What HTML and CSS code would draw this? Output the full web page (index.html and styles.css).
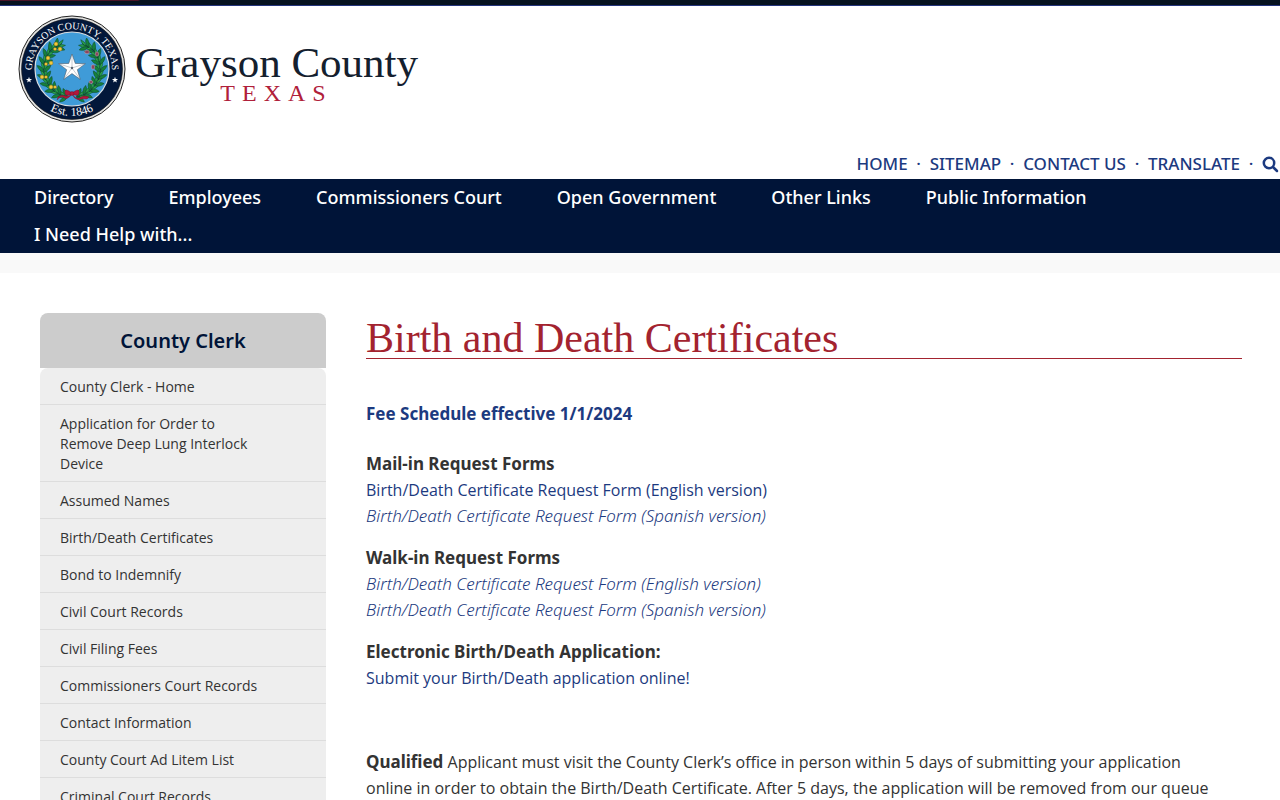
FILE: index.html
```
<!DOCTYPE html>
<html lang="en">
<head>
    <meta charset="UTF-8">
    <meta name="viewport" content="width=device-width, initial-scale=1.0">
    <title>Birth and Death Certificates - Grayson County, Texas</title>
    <link rel="stylesheet" href="styles.css">
</head>
<body>
    <div class="top-bar"></div>

    <header class="site-header">
        <a class="logo" href="#">
            <svg class="seal" viewBox="-54 -54 108 108" aria-hidden="true">
                <defs>
                    <path id="arc-top" d="M-39.8 4.2 A40 40 0 1 1 39.8 4.2"/>
                    <path id="arc-bottom" d="M-47 0 A47 47 0 0 0 47 0"/>
                    <path id="star" d="M0 -10 L2.35 -3.24 L9.51 -3.09 L3.8 1.24 L5.88 8.09 L0 4 L-5.88 8.09 L-3.8 1.24 L-9.51 -3.09 L-2.35 -3.24 Z"/>
                    <!-- one tuft of leaves, growing downwards -->
                    <g id="sprig">
                        <path d="M0 -3 Q1 0 0 5" stroke="#123f22" stroke-width="1"/>
                        <path d="M0 -2 Q5 -2 7 4 Q2 4 0 -2Z M0 -2 Q-5 -2 -7 4 Q-2 4 0 -2Z" fill="#16813b" stroke="#0c4a27" stroke-width=".5"/>
                        <path d="M0 0 Q3 2 2.5 8 Q-1 5 0 0Z M0 0 Q-4 2 -3.5 7 Q0 5 0 0Z" fill="#2aa34c" stroke="#0c4a27" stroke-width=".5"/>
                    </g>
                    <g id="branch">
                        <use href="#sprig" transform="rotate(104) translate(28 0)"/>
                        <use href="#sprig" transform="rotate(119) translate(28 0)"/>
                        <use href="#sprig" transform="rotate(134) translate(28 0)"/>
                        <use href="#sprig" transform="rotate(149) translate(28 0)"/>
                        <use href="#sprig" transform="rotate(164) translate(28 0)"/>
                        <use href="#sprig" transform="rotate(179) translate(28 0)"/>
                        <use href="#sprig" transform="rotate(194) translate(28 0)"/>
                        <use href="#sprig" transform="rotate(209) translate(28 0)"/>
                        <use href="#sprig" transform="rotate(224) translate(28 0)"/>
                        <use href="#sprig" transform="rotate(238) translate(27 0)"/>
                    </g>
                </defs>
                <circle r="53" fill="#e4e4e2" stroke="#222" stroke-width="1"/>
                <circle r="50.5" fill="#02173a" stroke="#1a1a1a" stroke-width=".6"/>
                <circle r="37" fill="#3f9bd8" stroke="#d8dde2" stroke-width="1.2"/>
                <use href="#branch"/>
                <use href="#branch" transform="scale(-1 1)"/>
                <g fill="#f3c93a" stroke="#7c5a12" stroke-width=".4">
                    <circle cx="-16" cy="-25" r="2"/><circle cx="-12" cy="-20" r="2"/><circle cx="-17" cy="-20" r="1.6"/>
                    <circle cx="-24" cy="-11" r="2"/><circle cx="-21" cy="-6" r="2"/><circle cx="-26" cy="-5" r="1.6"/>
                    <circle cx="-30" cy="8" r="2"/><circle cx="-26" cy="8" r="1.6"/>
                    <circle cx="-21" cy="18" r="2"/><circle cx="-17" cy="18" r="1.6"/>
                </g>
                <g fill="#8b4560" stroke="#e0b5bd" stroke-width=".4">
                    <ellipse cx="15" cy="-17" rx="2.4" ry="1.7"/><ellipse cx="25" cy="-15" rx="1.6" ry="2.2"/>
                    <ellipse cx="21" cy="-2" rx="1.7" ry="2.3"/><ellipse cx="19" cy="13" rx="1.8" ry="1.5"/>
                </g>
                <g fill="#b3173b" stroke="#6e0d26" stroke-width=".4">
                    <path d="M0 24 Q-8 18 -7 24 Q-7 28 0 25Z M0 24 Q8 18 7 24 Q7 28 0 25Z"/>
                    <path d="M0 25 Q-5 32 -9 28 Q-12 27 -15 31 L-14 28 Q-10 25 -7 27 Q-4 28 0 25Z M0 25 Q5 32 9 28 Q13 26 17 28 L15 30 Q10 29 7 31 Q2 30 0 25Z"/>
                    <circle cy="24.5" r="2"/>
                </g>
                <use href="#star" fill="#fff" stroke="#4b5560" stroke-width=".4" transform="translate(0 -1) scale(1.4)"/>
                <path d="M0 -1 V-14 M0 -1 L12.5 -5 M0 -1 L8 10 M0 -1 L-8 10 M0 -1 L-12.5 -5" stroke="#8d969f" stroke-width=".5"/>
                <circle cy="-1" r="1.2" fill="#59636e"/>
                <use href="#star" fill="#fff" transform="translate(-43 11) scale(.32)"/>
                <use href="#star" fill="#fff" transform="translate(43 11) scale(.32)"/>
                <text class="seal-text"><textPath href="#arc-top" startOffset="50%">GRAYSON COUNTY, TEXAS</textPath></text>
                <text class="seal-text seal-year"><textPath href="#arc-bottom" startOffset="50%">Est. 1846</textPath></text>
            </svg>
            <span class="logo-words">
                <span class="logo-name">Grayson County</span>
                <span class="logo-state">TEXAS</span>
            </span>
        </a>

        <ul class="quick-links">
            <li><a href="#">HOME</a></li>
            <li><a href="#">SITEMAP</a></li>
            <li><a href="#">CONTACT US</a></li>
            <li><a href="#">TRANSLATE</a></li>
            <li>
                <button class="search-btn" type="button" aria-label="Search">
                    <svg viewBox="0 0 17 17" aria-hidden="true">
                        <circle cx="7" cy="7" r="5.2"/>
                        <path d="M11 11 L15 15"/>
                    </svg>
                </button>
            </li>
        </ul>
    </header>

    <nav class="main-nav">
        <a href="#">Directory</a>
        <a href="#">Employees</a>
        <a href="#">Commissioners Court</a>
        <a href="#">Open Government</a>
        <a href="#">Other Links</a>
        <a href="#">Public Information</a>
        <a href="#">I Need Help with...</a>
    </nav>
    <div class="nav-strip"></div>

    <div class="page">
        <aside class="sidebar">
            <h2>County Clerk</h2>
            <ul>
                <li><a href="#">County Clerk - Home</a></li>
                <li><a href="#">Application for Order to Remove Deep Lung Interlock Device</a></li>
                <li><a href="#">Assumed Names</a></li>
                <li><a href="#">Birth/Death Certificates</a></li>
                <li><a href="#">Bond to Indemnify</a></li>
                <li><a href="#">Civil Court Records</a></li>
                <li><a href="#">Civil Filing Fees</a></li>
                <li><a href="#">Commissioners Court Records</a></li>
                <li><a href="#">Contact Information</a></li>
                <li><a href="#">County Court Ad Litem List</a></li>
                <li><a href="#">Criminal Court Records</a></li>
            </ul>
        </aside>

        <main class="content">
            <h1>Birth and Death Certificates</h1>
            <p class="fees"><a href="#"><strong>Fee Schedule effective 1/1/2024</strong></a></p>
            <p>
                <strong>Mail-in Request Forms</strong><br>
                <a href="#">Birth/Death Certificate Request Form (English version)</a><br>
                <a href="#"><em>Birth/Death Certificate Request Form (Spanish version)</em></a>
            </p>
            <p>
                <strong>Walk-in Request Forms</strong><br>
                <a href="#"><em>Birth/Death Certificate Request Form (English version)</em></a><br>
                <a href="#"><em>Birth/Death Certificate Request Form (Spanish version)</em></a>
            </p>
            <p>
                <strong>Electronic Birth/Death Application:</strong><br>
                <a href="#">Submit your Birth/Death application online!</a>
            </p>
            <p>&nbsp;</p>
            <p><strong>Qualified</strong> Applicant must visit the County Clerk’s office in person within 5 days of submitting your application online in order to obtain the Birth/Death Certificate. After 5 days, the application will be removed from our queue</p>
        </main>
    </div>
</body>
</html>
```
FILE: styles.css
```
:root {
    --navy: #001438;
    --link: #1c3a80;
    --red: #a3232f;
    --text: #333333;
}
* {
    box-sizing: border-box;
}
body {
    margin: 0;
    background-color: #ffffff;
    color: var(--text);
    font-family: "Noto Sans", "Open Sans", sans-serif;
    font-size: 17px;
    line-height: 26px;
}
a {
    color: var(--link);
    text-decoration: none;
}
ul {
    list-style: none;
    margin: 0;
    padding: 0;
}

/* header */
.top-bar {
    height: 6px;
    background: linear-gradient(to right, #4a1428 138px, transparent 140px) top / 100% 1px no-repeat #06121f;
    border-bottom: 1px solid #24357c;
}
.site-header {
    display: flex;
    flex-direction: column;
    justify-content: space-between;
    min-height: 173px;
    padding: 9px 0 2px 18px;
}
.logo {
    display: flex;
    align-self: flex-start;
    gap: 9px;
}
.seal {
    width: 108px;
    height: 108px;
    fill: none;
}
.seal-text {
    fill: #ffffff;
    font-family: "Liberation Serif", serif;
    font-size: 10px;
    text-anchor: middle;
}
.seal-year {
    font-size: 12px;
}
.logo-words {
    display: flex;
    flex-direction: column;
    align-items: center;
    padding-top: 28px;
    font-family: "Liberation Serif", serif;
}
.logo-name {
    color: #14202e;
    font-size: 43px;
    line-height: 40px;
}
.logo-state {
    color: #b0203a;
    font-size: 24px;
    line-height: 20px;
    letter-spacing: 7px;
}
.quick-links {
    display: flex;
    align-self: flex-end;
    font-weight: 500;
}
.quick-links li {
    display: flex;
    align-items: center;
}
.quick-links li + li::before {
    content: "·";
    width: 22px;
    color: var(--link);
    text-align: center;
}
.search-btn {
    display: flex;
    padding: 0 1px 0 0;
    border: 0;
    background: none;
    cursor: pointer;
}
.search-btn svg {
    width: 17px;
    height: 17px;
    fill: none;
    stroke: var(--link);
    stroke-width: 2.5;
    stroke-linecap: round;
}

/* navigation */
.main-nav {
    display: flex;
    flex-wrap: wrap;
    column-gap: 55px;
    padding: 0 34px;
    background-color: var(--navy);
}
.main-nav a {
    color: #ffffff;
    font-size: 18px;
    font-weight: 500;
    line-height: 37px;
}
.nav-strip {
    height: 20px;
    background-color: #f9f9f9;
}

/* page */
.page {
    display: flex;
    align-items: flex-start;
    gap: 40px;
    padding: 40px 38px 40px 40px;
}
.sidebar {
    flex: 0 0 286px;
}
.sidebar h2 {
    margin: 0;
    border-radius: 8px 8px 0 0;
    background-color: #cccccc;
    color: var(--navy);
    font-size: 20px;
    font-weight: 600;
    line-height: 55px;
    text-align: center;
}
.sidebar ul {
    border-radius: 8px 8px 0 0;
    background-color: #eeeeee;
}
.sidebar li {
    border-bottom: 1px solid #dddddd;
}
.sidebar a {
    display: block;
    padding: 9px 60px 7px 20px;
    color: var(--text);
    font-family: "Open Sans", sans-serif;
    font-size: 14px;
    line-height: 20px;
}
.content {
    flex: 1;
    min-width: 0;
    font-family: "Open Sans", sans-serif;
    font-size: 16px;
}
.content h1 {
    margin: 0 0 42px;
    padding-top: 5px;
    border-bottom: 1px solid var(--red);
    color: var(--red);
    font-family: "Liberation Serif", serif;
    font-size: 42px;
    font-weight: 400;
    line-height: 40px;
}
.content p {
    margin: 0 0 16px;
    padding-right: 20px;
}
.content .fees {
    margin-bottom: 24px;
}
strong,
em {
    font-family: "Noto Sans", sans-serif;
    font-size: 17px;
}
strong {
    font-weight: 700;
}
em {
    font-weight: 300;
}
```
